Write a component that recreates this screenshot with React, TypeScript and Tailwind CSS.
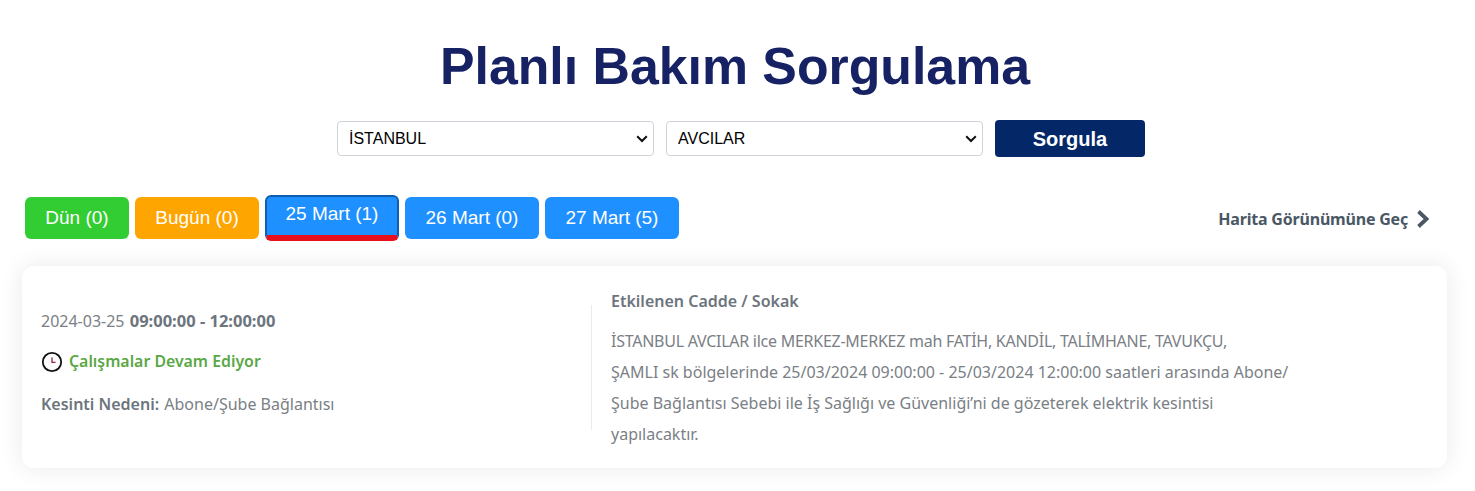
const tabs = [
  { label: 'Dün (0)', color: 'bg-[#32cd32]', width: 'w-[104px]' },
  { label: 'Bugün (0)', color: 'bg-[#ffa500]', width: 'w-[124px]' },
  { label: '25 Mart (1)', color: 'bg-[#1e90ff]', width: 'w-[134px]', active: true },
  { label: '26 Mart (0)', color: 'bg-[#1e90ff]', width: 'w-[134px]' },
  { label: '27 Mart (5)', color: 'bg-[#1e90ff]', width: 'w-[134px]' },
]

function Tab({ label, color, width, active }: { label: string; color: string; width: string; active?: boolean }) {
  if (active) {
    return (
      <button className={`${width} ${color} h-[46px] -mt-0.5 rounded-md border-2 border-[#0f5fb0] border-b-[6px] border-b-[#e8101c] pb-1 text-[19px] text-white font-['Liberation_Sans',sans-serif]`}>
        {label}
      </button>
    )
  }
  return (
    <button className={`${width} ${color} h-[42px] rounded-md text-[19px] text-white font-['Liberation_Sans',sans-serif]`}>
      {label}
    </button>
  )
}

function Select({ value }: { value: string }) {
  return (
    <div className="relative w-[317px] h-[35px]">
      <select className="w-full h-full appearance-none rounded border border-[#ced4da] bg-white pl-[11px] pr-8 pt-[1px] text-[16px] text-black">
        <option>{value}</option>
      </select>
      <svg width="12" height="8" viewBox="0 0 12 8" className="absolute right-[6px] top-[14px] pointer-events-none">
        <path d="M1.2 1.2L6 6L10.8 1.2" fill="none" stroke="#111" strokeWidth="2" />
      </svg>
    </div>
  )
}

function ClockIcon() {
  return (
    <svg width="22" height="22" viewBox="0 0 22 22" className="shrink-0">
      <circle cx="11" cy="11" r="9.2" fill="#fbfbfb" stroke="#111" strokeWidth="1.8" />
      <path d="M11 6.5V11.3H14.5" fill="none" stroke="#8a2b3c" strokeWidth="1.3" />
    </svg>
  )
}

export default function App() {
  return (
    <div className="w-full h-[491px] bg-white overflow-hidden font-['Noto_Sans',sans-serif]">
      <h1 className="pt-[34px] pr-[5px] text-center text-[51.8px] leading-[64px] font-bold text-[#162264] font-['Liberation_Sans',sans-serif]">
        Planlı Bakım Sorgulama
      </h1>

      <div className="mt-[22px] flex items-center justify-center gap-3 pl-[7px] font-['Liberation_Sans',sans-serif]">
        <Select value="İSTANBUL" />
        <Select value="AVCILAR" />
        <button className="w-[150px] h-[37px] rounded bg-[#042767] text-[20px] font-bold text-white">Sorgula</button>
      </div>

      <div className="mt-[40px] flex items-center justify-between pl-[25px] pr-[45px]">
        <div className="flex items-start gap-1.5">
          {tabs.map(tab => (
            <Tab key={tab.label} {...tab} />
          ))}
        </div>
        <a className="flex items-center gap-2 text-[16px] font-bold tracking-[-0.2px] text-[#4a5865]">
          Harita Görünümüne Geç
          <svg width="14" height="20" viewBox="0 0 14 20">
            <path d="M2.5 2.5L10.5 10L2.5 17.5" fill="none" stroke="#4a5865" strokeWidth="3.8" />
          </svg>
        </a>
      </div>

      <div className="mx-[22px] mt-[25px] w-[1425px] h-[202px] rounded-xl bg-white shadow-[0_0_24px_rgba(0,0,0,0.09)] flex pt-[24px] text-[#7a8085]">
        <div className="w-[570px] h-[125px] mt-[15px] border-r border-[#e9ecef] pl-[19px] pt-[4px] text-[16px]">
          <p>
            2024-03-25 <span className="ml-[1px] text-[16.5px] font-bold text-[#6c757d]">09:00:00 - 12:00:00</span>
          </p>
          <p className="mt-[16px] flex items-center gap-[6px] text-[15.85px] font-semibold text-[#5aa845]">
            <ClockIcon />
            Çalışmalar Devam Ediyor
          </p>
          <p className="mt-[18px]">
            <span className="font-semibold mr-[1px] text-[#6c757d]">Kesinti Nedeni:</span> Abone/Şube Bağlantısı
          </p>
        </div>
        <div className="pl-[19px] w-[710px]">
          <h3 className="text-[16px] leading-[22px] font-semibold text-[#6c757d]">Etkilenen Cadde / Sokak</h3>
          <p className="mt-[14px] text-[16px] leading-[31px]">
            <span className="tracking-[-0.26px]">İSTANBUL AVCILAR ilce MERKEZ-MERKEZ mah FATİH, KANDİL, TALİMHANE, TAVUKÇU,</span>
            <br />
            ŞAMLI sk bölgelerinde 25/03/2024 09:00:00 - 25/03/2024 12:00:00 saatleri arasında Abone/
            <br />
            Şube Bağlantısı Sebebi ile İş Sağlığı ve Güvenliği’ni de gözeterek elektrik kesintisi
            <br />
            yapılacaktır.
          </p>
        </div>
      </div>
    </div>
  )
}
